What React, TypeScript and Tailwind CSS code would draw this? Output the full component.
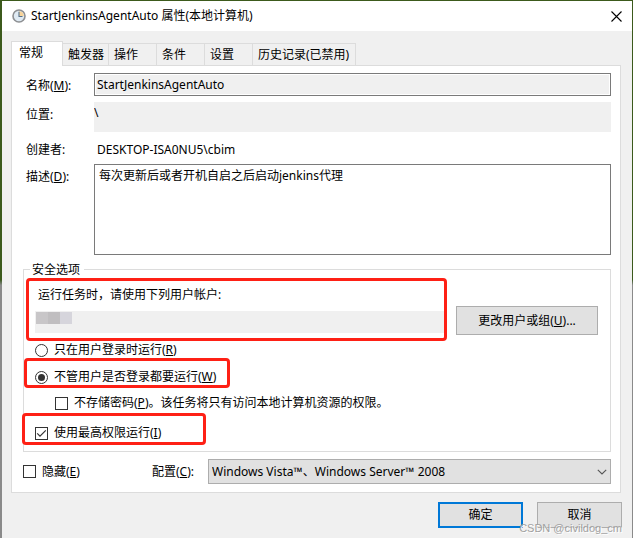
import { useState } from "react";

const tabs = [
     { name: "触发器", width: "w-[46px]" },
     { name: "操作", width: "w-12" },
     { name: "条件", width: "w-12" },
     { name: "设置", width: "w-12" },
     { name: "历史记录(已禁用)", width: "w-[103px]" },
];

function ClockIcon() {
     return (
          <svg width="14" height="14" viewBox="0 0 14 14">
               <circle cx="7" cy="7" r="6" fill="#dfeaf3" stroke="#8d8f92" strokeWidth="1.6" />
               <path d="M7 7V2.2A4.8 4.8 0 0 1 11.8 7Z" fill="#f8d49a" />
               <path d="M7 2.8V7.5H10.5" fill="none" stroke="#56708a" strokeWidth="1.1" />
          </svg>
     );
}

function CheckBox({ id, checked, onChange }: { id: string; checked: boolean; onChange: () => void }) {
     return (
          <span className="relative flex h-[13px] w-[13px] shrink-0">
               <input
                    id={id}
                    type="checkbox"
                    checked={checked}
                    onChange={onChange}
                    className="h-[13px] w-[13px] appearance-none border border-[#333333] bg-white"
               />
               {checked && (
                    <svg className="pointer-events-none absolute inset-0" width="13" height="13" viewBox="0 0 13 13">
                         <path d="M2.2 6.3L5 9.2L10.8 3.4" fill="none" stroke="#333" strokeWidth="1.2" />
                    </svg>
               )}
          </span>
     );
}

function Radio({ id, checked, onChange }: { id: string; checked: boolean; onChange: () => void }) {
     return (
          <span className="relative flex h-[13px] w-[13px] shrink-0">
               <input
                    id={id}
                    type="radio"
                    name="logon"
                    checked={checked}
                    onChange={onChange}
                    className="h-[13px] w-[13px] appearance-none rounded-full border border-[#333333] bg-white"
               />
               {checked && (
                    <span className="pointer-events-none absolute inset-[3px] rounded-full bg-[#333333]" />
               )}
          </span>
     );
}

// red marker frame drawn over a group of controls
function Mark({ className }: { className: string }) {
     return (
          <div
               className={`pointer-events-none absolute rounded-[4px] border-[3px] border-[#fe2015] ${className}`}
          />
     );
}

export default function App() {
     const [logon, setLogon] = useState("any");
     const [noPassword, setNoPassword] = useState(false);
     const [highest, setHighest] = useState(true);
     const [hidden, setHidden] = useState(false);

     return (
          <div className="bg-linear-to-b from-[#3c5a1c] from-52% to-[#8a8a8a] to-53% pt-px pr-px pl-0.5 font-['Noto_Sans','Noto_Sans_CJK_SC',sans-serif] text-xs leading-4 text-black">
               <div className="relative bg-[#f0f0f0] pb-2.5">
                    <header className="flex h-[30px] items-center bg-white px-2.5">
                         <ClockIcon />
                         <h1 className="ml-[5px] flex-1">StartJenkinsAgentAuto 属性(本地计算机)</h1>
                         <button aria-label="关闭">
                              <svg width="11" height="11" viewBox="0 0 11 11">
                                   <path d="M0.5 0.5L10.5 10.5M10.5 0.5L0.5 10.5" stroke="#000" strokeWidth="1.1" />
                              </svg>
                         </button>
                    </header>

                    <div className="mt-2.5 mr-[11px] ml-[9px]">
                         <div role="tablist" className="flex items-end">
                              <button
                                   role="tab"
                                   aria-selected="true"
                                   className="relative z-10 -mb-px h-[25px] w-[52px] border border-b-0 border-[#dcdcdc] bg-white pr-3 pb-0.5"
                              >
                                   常规
                              </button>
                              {tabs.map((tab) => (
                                   <button
                                        key={tab.name}
                                        role="tab"
                                        aria-selected="false"
                                        className={`h-[22px] border-t border-r border-[#dcdcdc] pl-[5px] text-left whitespace-nowrap ${tab.width}`}
                                   >
                                        {tab.name}
                                   </button>
                              ))}
                         </div>

                         <div role="tabpanel" className="border border-[#dcdcdc] bg-white pt-[7px] pr-[9px] pb-2 pl-[11px]">
                              <div className="pl-[3px]">
                                   <div className="flex">
                                        <label htmlFor="name" className="mt-[5px] w-[68px]">
                                             名称(<u>M</u>):
                                        </label>
                                        <input
                                             id="name"
                                             readOnly
                                             value="StartJenkinsAgentAuto"
                                             className="h-[23px] min-w-0 flex-1 border border-[#7a7a7a] bg-[#f0f0f0] px-0.5 inset-ring inset-ring-white"
                                        />
                                   </div>
                                   <div className="mt-1.5 flex">
                                        <label htmlFor="location" className="mt-[5px] w-[68px]">
                                             位置:
                                        </label>
                                        <input
                                             id="location"
                                             readOnly
                                             value="\"
                                             className="h-[30px] min-w-0 flex-1 bg-[#f0f0f0] pb-2.5"
                                        />
                                   </div>
                                   <div className="mt-2.5 flex">
                                        <span className="w-[71px]">创建者:</span>
                                        <span>DESKTOP-ISA0NU5\cbim</span>
                                   </div>
                                   <div className="mt-1.5 flex">
                                        <label htmlFor="desc" className="mt-[5px] w-[68px]">
                                             描述(<u>D</u>):
                                        </label>
                                        <textarea
                                             id="desc"
                                             defaultValue="每次更新后或者开机自启之后启动jenkins代理"
                                             className="block h-[91px] min-w-0 flex-1 resize-none border border-[#7a7a7a] px-1 py-[3px]"
                                        />
                                   </div>
                              </div>

                              <section className="relative mt-3.5 border border-[#dcdcdc] pt-[17px] pr-3 pb-2.5 pl-[11px]">
                                   <h2 className="absolute -top-2 left-1.5 bg-white pr-1 pl-0.5">安全选项</h2>
                                   <div className="flex items-end">
                                        <div className="relative flex-1">
                                             <label htmlFor="account" className="block pl-[3px]">
                                                  运行任务时，请使用下列用户帐户:
                                             </label>
                                             <div className="mt-2 flex h-[22px] bg-[#f0f0f0]">
                                                  <span className="mt-px ml-px h-3 w-3 bg-[#c8c6c8]" />
                                                  <span className="mt-px h-3 w-3 bg-[#c0bec0]" />
                                                  <span className="mt-px h-3 w-3 bg-[#d6d5dc]" />
                                                  <input id="account" readOnly className="min-w-0 flex-1" />
                                             </div>
                                             <Mark className="-top-[9px] -right-0.5 -bottom-2 -left-[9px]" />
                                        </div>
                                        <button className="-mb-0.5 ml-[11px] h-[29px] w-[142px] border border-[#adadad] bg-[#e1e1e1]">
                                             更改用户或组(<u>U</u>)...
                                        </button>
                                   </div>

                                   <div className="mt-[9px] flex items-center gap-1.5">
                                        <Radio id="logged" checked={logon === "logged"} onChange={() => setLogon("logged")} />
                                        <label htmlFor="logged">
                                             只在用户登录时运行(<u>R</u>)
                                        </label>
                                   </div>
                                   <div className="relative mt-[11px] flex w-fit items-center gap-1.5">
                                        <Radio id="any" checked={logon === "any"} onChange={() => setLogon("any")} />
                                        <label htmlFor="any">
                                             不管用户是否登录都要运行(<u>W</u>)
                                        </label>
                                        <Mark className="-top-[11px] -right-3.5 -bottom-[3px] -left-[11px]" />
                                   </div>
                                   <div className="mt-2.5 flex items-center gap-1.5 pl-5">
                                        <CheckBox id="nopass" checked={noPassword} onChange={() => setNoPassword(!noPassword)} />
                                        <label htmlFor="nopass">
                                             不存储密码(<u>P</u>)。该任务将只有访问本地计算机资源的权限。
                                        </label>
                                   </div>
                                   <div className="relative mt-3.5 flex w-fit items-center gap-1.5">
                                        <CheckBox id="highest" checked={highest} onChange={() => setHighest(!highest)} />
                                        <label htmlFor="highest">
                                             使用最高权限运行(<u>I</u>)
                                        </label>
                                        <Mark className="-top-3 -right-[45px] -bottom-1 -left-[13px]" />
                                   </div>
                              </section>

                              <div className="mt-[7px] flex items-center">
                                   <div className="flex w-[129px] items-center gap-1.5">
                                        <CheckBox id="hidden" checked={hidden} onChange={() => setHidden(!hidden)} />
                                        <label htmlFor="hidden">
                                             隐藏(<u>E</u>)
                                        </label>
                                   </div>
                                   <label htmlFor="config" className="w-14">
                                        配置(<u>C</u>):
                                   </label>
                                   <div className="relative flex min-w-0 flex-1">
                                        <select
                                             id="config"
                                             className="h-[25px] w-full appearance-none border border-[#adadad] bg-[#e1e1e1] pl-[3px]"
                                        >
                                             <option>Windows Vista™、Windows Server™ 2008</option>
                                        </select>
                                        <svg
                                             className="pointer-events-none absolute top-[10px] right-1"
                                             width="10"
                                             height="6"
                                             viewBox="0 0 10 6"
                                        >
                                             <path d="M0.8 0.8L5 5L9.2 0.8" fill="none" stroke="#555" strokeWidth="1.1" />
                                        </svg>
                                   </div>
                              </div>
                         </div>
                    </div>

                    <footer className="mt-[9px] mr-2.5 flex justify-end gap-3.5">
                         <button className="h-[26px] w-[85px] border-2 border-[#0078d7] bg-[#e1e1e1]">确定</button>
                         <button className="h-[26px] w-[85px] border border-[#adadad] bg-[#e1e1e1]">取消</button>
                    </footer>
                    <span className="pointer-events-none absolute right-2.5 bottom-0.5 font-['Liberation_Sans',sans-serif] text-[11px] text-[#a0a0a0] text-shadow-[1px_1px_0_#ffffff]">
                         CSDN @civildog_cm
                    </span>
               </div>
          </div>
     );
}
